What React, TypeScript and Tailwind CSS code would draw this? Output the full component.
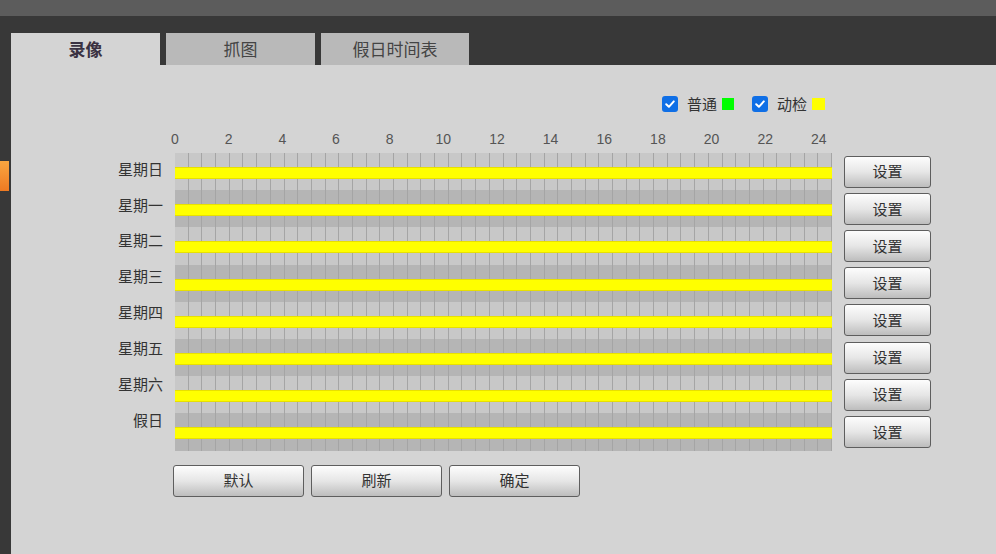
import React from "react";

const days = ["星期日", "星期一", "星期二", "星期三", "星期四", "星期五", "星期六", "假日"];
const hours = [0, 2, 4, 6, 8, 10, 12, 14, 16, 18, 20, 22, 24];
const cells = Array.from({ length: 48 }, (_, i) => i);

const CJK = "font-['Noto_Sans_CJK_SC','Noto_Sans',sans-serif]";

function Check() {
  return (
    <div className="w-4 h-4 rounded-[3px] bg-[#0f6fe6] flex items-center justify-center">
      <svg width="12" height="12" viewBox="0 0 12 12">
        <path d="M2.2 6.2 L4.9 8.8 L9.8 3.4" fill="none" stroke="#fff" strokeWidth="2" strokeLinecap="round" strokeLinejoin="round" />
      </svg>
    </div>
  );
}

function Btn({ label, w }: { label: string; w: string }) {
  return (
    <div
      className={`${w} h-[32px] shrink-0 rounded-[3px] border border-[#5e5e5e] bg-gradient-to-b from-[#fdfdfd] via-[#e6e6e6] to-[#bdbdbd] flex items-center justify-center text-[15px] text-[#333] ${CJK}`}
    >
      {label}
    </div>
  );
}

function Cells({ dark, h }: { dark: boolean; h: string }) {
  return (
    <div className={`${h} flex ${dark ? "bg-[#b5b5b5]" : "bg-[#c8c8c8]"}`}>
      {cells.map((c) => (
        <div key={c} className="flex-1 border-r border-[#a5a5a5]" />
      ))}
    </div>
  );
}

export default function App() {
  return (
    <div className="w-[996px] h-[554px] bg-[#383838] flex flex-col overflow-hidden">
      <div className="h-[16px] bg-[#5c5c5c] shrink-0" />
      <div className="flex flex-1 min-h-0">
        <div className="w-[11px] shrink-0 pt-[145px]">
          <div className="h-[30px] w-[9px] bg-gradient-to-b from-[#f9a640] to-[#ee7a22]" />
        </div>
        <div className="flex-1 flex flex-col pt-[17px] min-w-0">
          <div className={`h-[32px] flex gap-[6px] shrink-0 ${CJK}`}>
            <div className="w-[149px] bg-[#d4d4d4] flex items-center justify-center text-[17px] font-bold text-[#3a3242]">录像</div>
            <div className="w-[149px] bg-[#b9b9b9] flex items-center justify-center text-[17px] text-[#444]">抓图</div>
            <div className="w-[148px] bg-[#b9b9b9] flex items-center justify-center text-[17px] text-[#444]">假日时间表</div>
          </div>
          <div className="flex-1 bg-[#d4d4d4] flex flex-col">
            <div className={`pt-[31px] pr-[171px] flex justify-end items-center h-[47px] text-[15px] text-[#333] ${CJK}`}>
              <Check />
              <span className="ml-[9px] leading-[16px]">普通</span>
              <div className="ml-[5px] w-[12px] h-[12px] bg-[#00ff00]" />
              <div className="ml-[18px]"><Check /></div>
              <span className="ml-[9px] leading-[16px]">动检</span>
              <div className="ml-[5px] w-[13px] h-[12px] bg-[#ffff00]" />
            </div>
            <div className="mt-[19px] ml-[154px] w-[664px] h-[16px] flex justify-between font-['Liberation_Sans',sans-serif] text-[14px] leading-[16px] text-[#555]">
              {hours.map((h) => (
                <span key={h} className="w-[20px] text-center">{h}</span>
              ))}
            </div>
            <div className="mt-[6px] flex pl-[100px]">
              <div className={`w-[52px] -mt-[2px] flex flex-col text-[15px] text-[#333] ${CJK}`}>
                {days.map((d) => (
                  <div key={d} className="h-[35.86px] flex items-center justify-end">{d}</div>
                ))}
              </div>
              <div className="ml-[12px] w-[657px] flex flex-col">
                {days.map((d, i) => (
                  <div key={d} className="h-[37.2px] flex flex-col">
                    <Cells dark={i % 2 === 1} h="h-[14px]" />
                    <div className="h-[12px] bg-[#ffff00] border-y border-[#e8e000]" />
                    <Cells dark={i % 2 === 1} h="flex-1" />
                  </div>
                ))}
              </div>
              <div className="ml-[12px] flex flex-col">
                {days.map((d) => (
                  <div key={d} className="h-[37.2px] flex items-center">
                    <Btn label="设置" w="w-[87px]" />
                  </div>
                ))}
              </div>
            </div>
            <div className="mt-[14px] pl-[162px] flex gap-[7px]">
              <Btn label="默认" w="w-[131px]" />
              <Btn label="刷新" w="w-[131px]" />
              <Btn label="确定" w="w-[131px]" />
            </div>
          </div>
        </div>
      </div>
    </div>
  );
}
